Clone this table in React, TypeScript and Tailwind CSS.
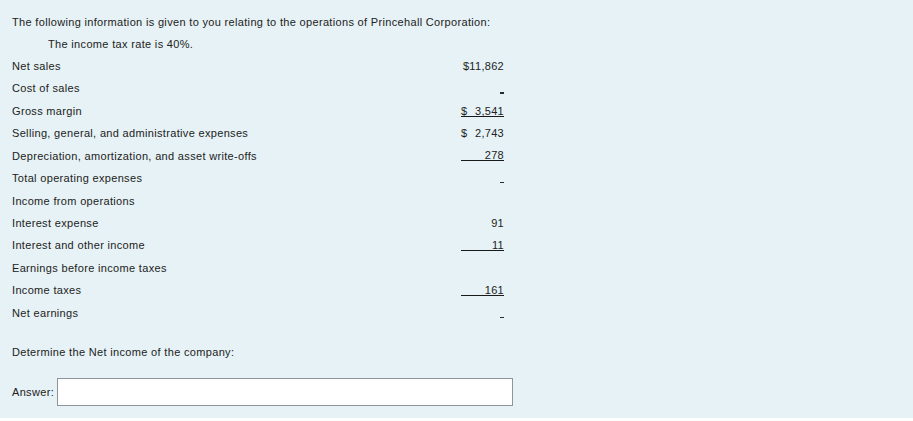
import React from "react";

type Row = { label: string; value?: string; dollar?: boolean; underline?: boolean; dash?: boolean };

const rows: Row[] = [
  { label: "Net sales", value: "$11,862" },
  { label: "Cost of sales", dash: true },
  { label: "Gross margin", value: "3,541", dollar: true, underline: true },
  { label: "Selling, general, and administrative expenses", value: "2,743", dollar: true },
  { label: "Depreciation, amortization, and asset write-offs", value: "278", underline: true },
  { label: "Total operating expenses", dash: true },
  { label: "Income from operations" },
  { label: "Interest expense", value: "91" },
  { label: "Interest and other income", value: "11", underline: true },
  { label: "Earnings before income taxes" },
  { label: "Income taxes", value: "161", underline: true },
  { label: "Net earnings", dash: true },
];

function ValueCell({ row }: { row: Row }) {
  if (row.dash) {
    return (
      <div className="flex h-[12px] w-[43px] items-end justify-end">
        <div className="mb-px h-[1.5px] w-[4px] bg-[#2a2a2a]" />
      </div>
    );
  }
  if (!row.value) return <div className="w-[43px]" />;
  return (
    <div
      className={
        "flex h-[11px] w-[43px] items-center justify-between leading-[10px] tracking-[0.3px] " +
        (row.underline ? "border-b border-[#1a1a1a]" : "border-b border-transparent")
      }
    >
      <span>{row.dollar ? "$" : ""}</span>
      <span>{row.value}</span>
    </div>
  );
}

export default function App() {
  return (
    <div className="w-full bg-white">
      <div
        className="h-[418px] w-full bg-[#e6f2f5] pt-[12px] text-[11px] tracking-[0.33px] text-[#222222]"
        style={{ fontFamily: '"Liberation Sans", Arial, sans-serif' }}
      >
        <div className="flex h-[21px] items-center pl-[12px]">
          The following information is given to you relating to the operations of Princehall Corporation:
        </div>
        <div className="flex h-[22px] items-center pl-[48px]">The income tax rate is 40%.</div>
        <div className="flex flex-col pl-[12px]">
          {rows.map((r) => (
            <div key={r.label} className="flex h-[22.45px] items-center">
              <div className="w-[449px]">{r.label}</div>
              <ValueCell row={r} />
            </div>
          ))}
        </div>
        <div className="mt-[17px] flex h-[22px] items-center pl-[12px]">
          Determine the Net income of the company:
        </div>
        <div className="mt-[15px] flex items-center pl-[12px]">
          <span className="w-[45px]">Answer:</span>
          <div className="h-[28px] w-[456px] border border-[#8f959a] bg-white" />
        </div>
      </div>
    </div>
  );
}
